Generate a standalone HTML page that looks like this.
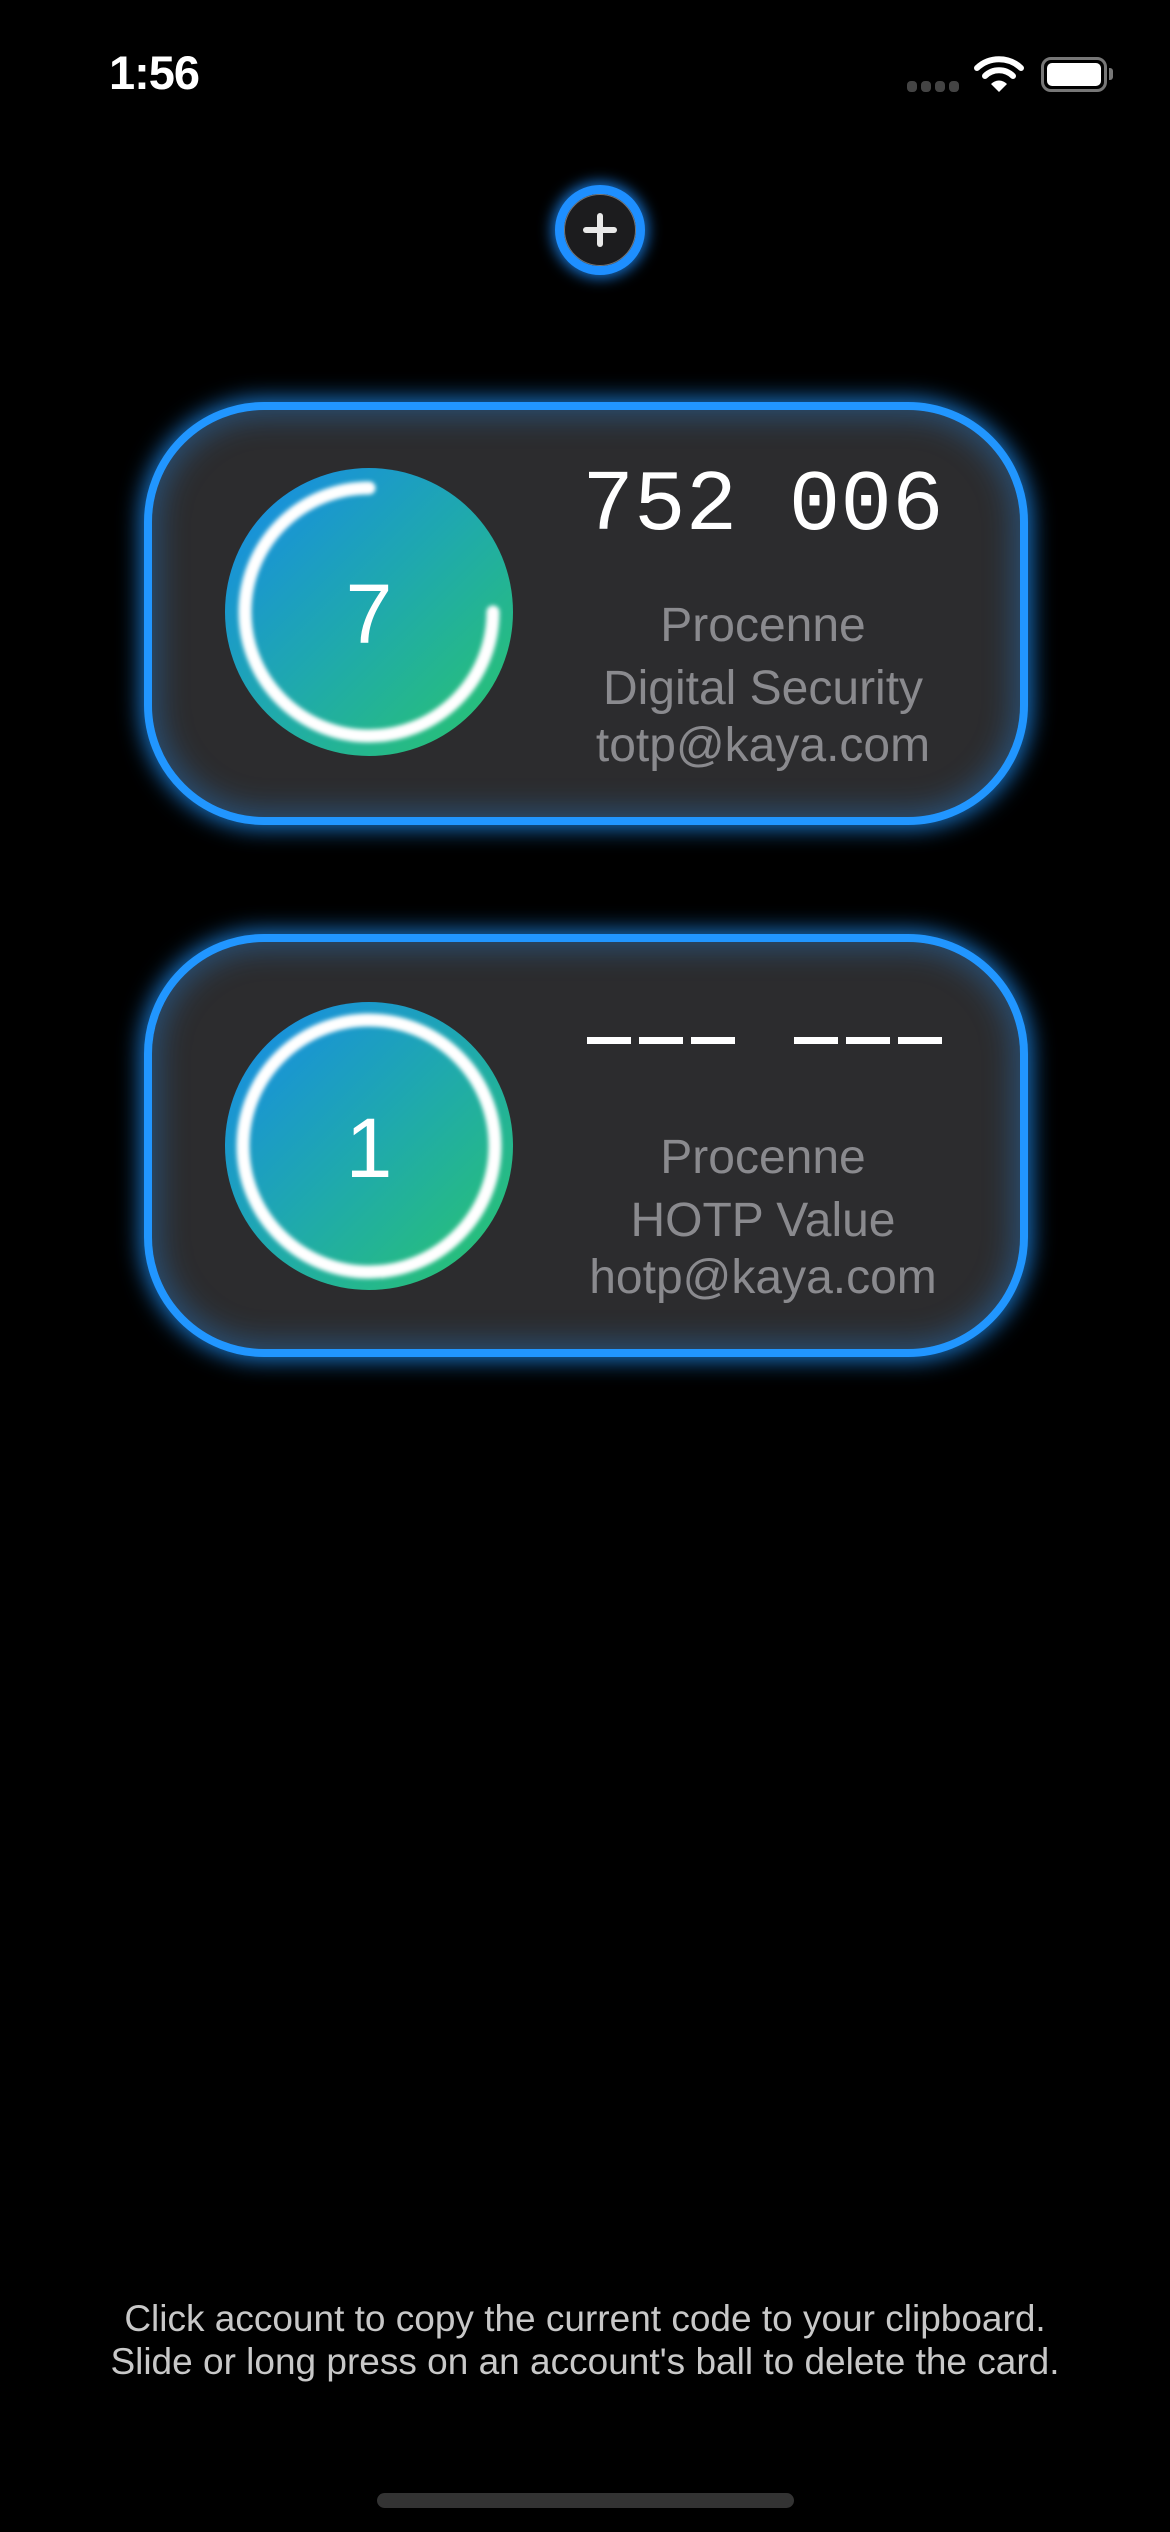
<!DOCTYPE html>
<html><head><meta charset="utf-8"><style>
*{margin:0;padding:0;box-sizing:border-box}
body{width:1170px;height:2532px;background:#000;position:relative;overflow:hidden;font-family:"Liberation Sans",sans-serif}
.abs{position:absolute}
.card{position:absolute;left:144px;width:884px;height:423px;border:8px solid #2196ff;border-radius:120px;background:#2c2c2e;box-shadow:0 0 22px 4px rgba(33,150,255,.75),inset 0 0 30px 6px rgba(33,150,255,.35)}
.txt{position:absolute;left:513px;width:500px;text-align:center;color:#8a8a8e;font-size:48px;line-height:62px;font-weight:300}
.code{position:absolute;left:560px;width:406px;text-align:center;color:#fff;font-family:"Liberation Mono",monospace;font-size:86px;line-height:86px}
.num{position:absolute;width:288px;text-align:center;color:#fff;font-size:84px;line-height:84px;font-weight:300}
.foot{position:absolute;left:0;width:1170px;text-align:center;color:#c8c8c8;font-size:37px;line-height:43px}
.dash{position:absolute;height:7px;width:44px;background:#fff}
</style></head><body>
<div class="abs" style="left:109px;top:47px;color:#fff;font-size:47px;font-weight:bold;line-height:52px;letter-spacing:-1px">1:56</div>
<div class="abs" style="left:907px;top:81px;width:10px;height:11px;border-radius:4px;background:#444"></div>
<div class="abs" style="left:921px;top:81px;width:10px;height:11px;border-radius:4px;background:#444"></div>
<div class="abs" style="left:935px;top:81px;width:10px;height:11px;border-radius:4px;background:#444"></div>
<div class="abs" style="left:949px;top:81px;width:10px;height:11px;border-radius:4px;background:#444"></div>
<svg class="abs" style="left:974px;top:54px" width="50" height="40" viewBox="0 0 50 40"><path d="M3 14 A32 32 0 0 1 47 14" stroke="#fff" stroke-width="6" fill="none" stroke-linecap="round"/><path d="M11 22 A20 20 0 0 1 39 22" stroke="#fff" stroke-width="6" fill="none" stroke-linecap="round"/><path d="M17 30 L25 38 L33 30 A11 11 0 0 0 17 30Z" fill="#fff"/></svg>
<div class="abs" style="left:1041px;top:57px;width:66px;height:35px;border:3px solid #777;border-radius:10px"></div>
<div class="abs" style="left:1047px;top:63px;width:54px;height:23px;background:#fff;border-radius:5px"></div>
<div class="abs" style="left:1109px;top:68px;width:4px;height:12px;background:#777;border-radius:0 3px 3px 0"></div>

<div class="abs" style="left:555px;top:185px;width:90px;height:90px;border-radius:50%;border:9px solid #1e8fff;background:#1c1c1e;box-shadow:0 0 14px 3px rgba(30,143,255,.8),inset 0 0 0 1px #777"></div>
<div class="abs" style="left:583px;top:227px;width:34px;height:6px;background:#e8e8e8;border-radius:3px"></div>
<div class="abs" style="left:597px;top:213px;width:6px;height:34px;background:#e8e8e8;border-radius:3px"></div>

<div class="card" style="top:402px"></div>
<svg class="abs" style="left:225px;top:468px" width="288" height="288" viewBox="0 0 288 288">
<defs><linearGradient id="g" x1="0" y1="0" x2="1" y2="1"><stop offset="0" stop-color="#1689ea"/><stop offset="0.5" stop-color="#1fa9ad"/><stop offset="1" stop-color="#2ac66a"/></linearGradient>
<filter id="b"><feGaussianBlur stdDeviation="2"/></filter></defs>
<circle cx="144" cy="144" r="144" fill="url(#g)"/>
<path d="M144 20 A124 124 0 1 0 268 144" stroke="#fff" stroke-width="13" fill="none" stroke-linecap="round" filter="url(#b)"/>
</svg>
<div class="num" style="left:225px;top:572px">7</div>
<div class="code" style="top:463px">752 006</div>
<div class="txt" style="top:595px">Procenne</div>
<div class="txt" style="top:658px">Digital Security</div>
<div class="txt" style="top:715px">totp@kaya.com</div>

<div class="card" style="top:934px"></div>
<svg class="abs" style="left:225px;top:1002px" width="288" height="288" viewBox="0 0 288 288">
<circle cx="144" cy="144" r="144" fill="url(#g)"/>
<circle cx="144" cy="144" r="126" stroke="#fff" stroke-width="13" fill="none" filter="url(#b)"/>
</svg>
<div class="num" style="left:225px;top:1106px">1</div>
<div class="dash" style="left:587px;top:1037px"></div>
<div class="dash" style="left:639px;top:1037px"></div>
<div class="dash" style="left:691px;top:1037px"></div>
<div class="dash" style="left:794px;top:1037px"></div>
<div class="dash" style="left:846px;top:1037px"></div>
<div class="dash" style="left:898px;top:1037px"></div>
<div class="txt" style="top:1127px">Procenne</div>
<div class="txt" style="top:1190px">HOTP Value</div>
<div class="txt" style="top:1247px">hotp@kaya.com</div>

<div class="foot" style="top:2297px">Click account to copy the current code to your clipboard.</div>
<div class="foot" style="top:2340px">Slide or long press on an account's ball to delete the card.</div>
<div class="abs" style="left:377px;top:2493px;width:417px;height:15px;border-radius:8px;background:#333"></div>
</body></html>
